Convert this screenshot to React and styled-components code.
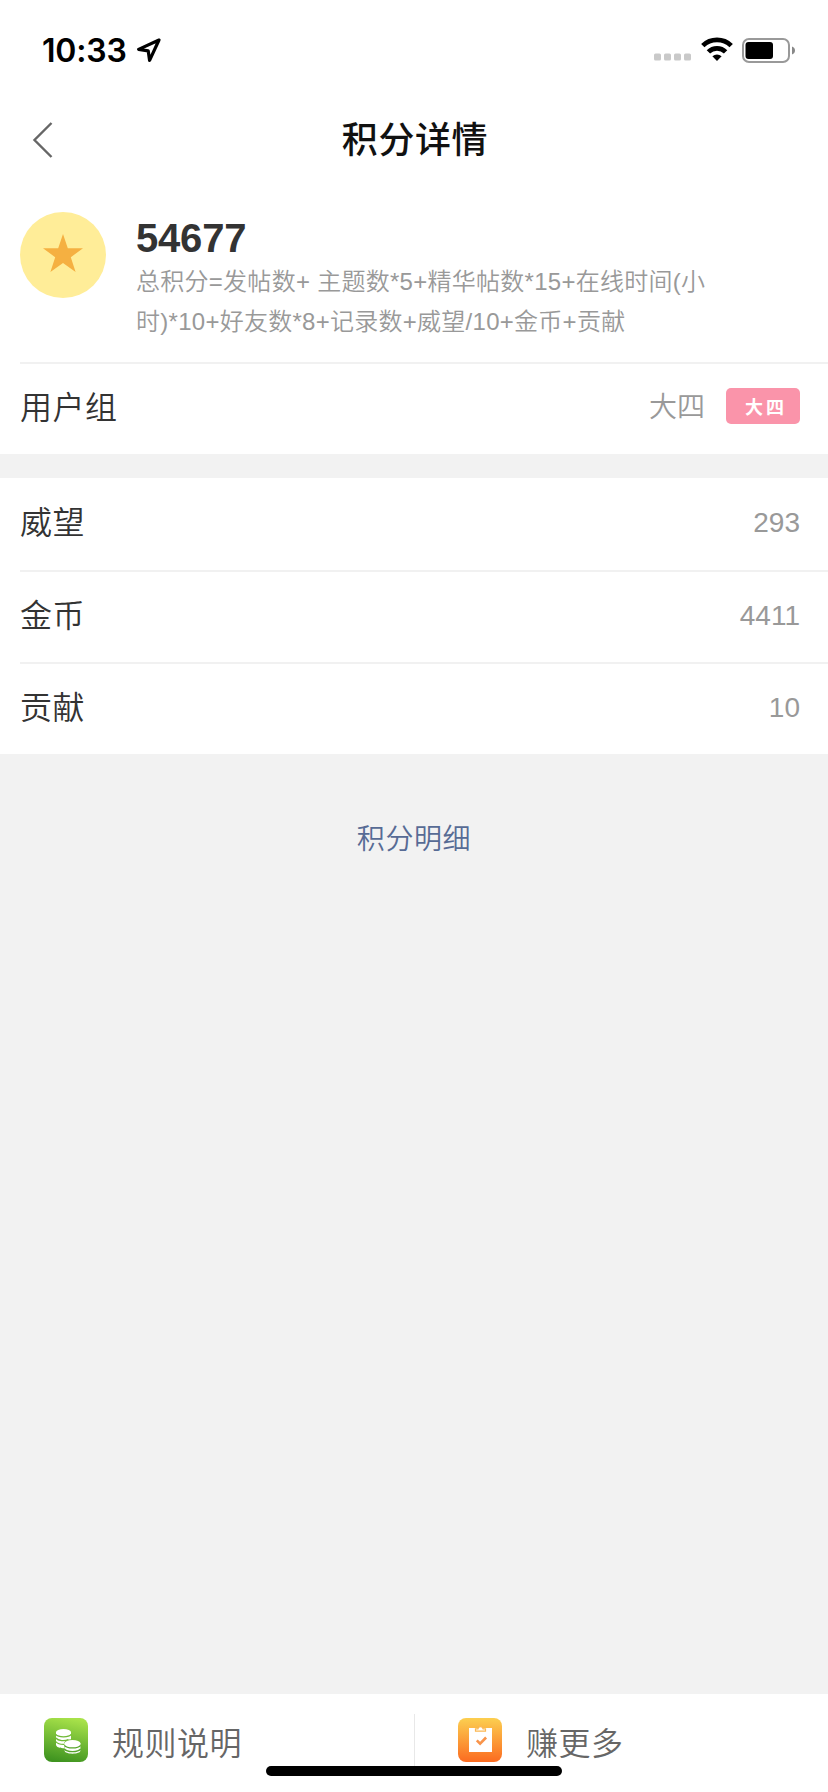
import React from 'react';
import styled, { createGlobalStyle } from 'styled-components';

const GlobalStyle = createGlobalStyle`
  * {
    box-sizing: border-box;
  }
  body {
    margin: 0;
    background: #f2f2f2;
    font-family: 'Liberation Sans', 'Noto Sans CJK SC', sans-serif;
    font-weight: 350;
  }
`;

const Page = styled.div`
  width: 828px;
  height: 1792px;
  display: flex;
  flex-direction: column;
  background: #f2f2f2;
  overflow: hidden;
`;

const StatusBar = styled.div`
  height: 88px;
  padding: 12px 33px 0 42px;
  display: flex;
  align-items: center;
  justify-content: space-between;
  background: #fff;
`;

const StatusGroup = styled.div`
  display: flex;
  align-items: center;
`;

const Time = styled.span`
  font-family: Inter, sans-serif;
  font-size: 32px;
  font-weight: 600;
  line-height: 40px;
  letter-spacing: -0.2px;
  color: #000;
  margin: 1px 9px 0 0;
`;

const NavBar = styled.header`
  height: 104px;
  padding: 2px 32px 0;
  display: grid;
  grid-template-columns: 40px 1fr 40px;
  align-items: center;
  background: #fff;
`;

const Title = styled.h1`
  margin: 0 -2px 0 0;
  font-size: 36px;
  font-weight: 500;
  line-height: 48px;
  letter-spacing: 0.6px;
  text-align: center;
  color: #111;
`;

const Score = styled.section`
  height: 170px;
  padding: 20px 0 0 20px;
  display: flex;
  align-items: flex-start;
  background: #fff;
`;

const Medal = styled.div`
  flex: none;
  width: 86px;
  height: 86px;
  border-radius: 50%;
  display: flex;
  align-items: center;
  justify-content: center;
  background: #ffed98;
`;

const ScoreText = styled.div`
  width: 590px;
  margin-left: 30px;
  padding-top: 3px;
`;

const Total = styled.div`
  font-size: 40px;
  font-weight: 700;
  line-height: 46px;
  letter-spacing: -0.2px;
  color: #333;
`;

const Formula = styled.p`
  margin: 1px 0 0;
  font-size: 24px;
  line-height: 40px;
  letter-spacing: 0.27px;
  white-space: nowrap;
  color: #999;
`;

const List = styled.section`
  background: #fff;
  margin-bottom: ${({ $gap }) => $gap || 0}px;
`;

const Row = styled.div`
  height: 92px;
  margin-left: 20px;
  padding: 0 28px 3px 0;
  display: flex;
  align-items: center;
  border-top: ${({ $line }) => $line || 0}px solid #f1f1f1;
`;

const Label = styled.span`
  flex: 1;
  font-size: 32px;
  line-height: 44px;
  letter-spacing: 0.5px;
  color: #333;
`;

const Value = styled.span`
  font-size: 28px;
  line-height: 40px;
  color: #999;
`;

const GroupTag = styled.span`
  width: 74px;
  height: 36px;
  margin: 0 0 3px 21px;
  padding-left: 6px;
  border-radius: 5px;
  display: flex;
  align-items: center;
  justify-content: center;
  background: #fa94aa;
  color: #fff;
  font-size: 18px;
  font-weight: 700;
  letter-spacing: 3px;
`;

const DetailLink = styled.a`
  margin: 64px auto 0;
  font-size: 28px;
  line-height: 44px;
  letter-spacing: 0.6px;
  color: #576b95;
`;

const TabBar = styled.footer`
  position: relative;
  height: 98px;
  margin-top: auto;
  display: flex;
  background: #fff;
`;

const Tab = styled.div`
  flex: 1;
  padding: 24px 0 0 44px;
  display: flex;
  align-items: flex-start;
`;

const TabDivider = styled.div`
  width: 1px;
  height: 56px;
  margin: 20px -1px 0 0;
  background: #e8e8e8;
`;

const TabLabel = styled.span`
  margin: 2px 0 0 24px;
  font-size: 32px;
  line-height: 48px;
  letter-spacing: 0.5px;
  color: #666;
`;

const HomeIndicator = styled.div`
  position: absolute;
  left: 266px;
  bottom: 16px;
  width: 296px;
  height: 10px;
  border-radius: 5px;
  background: #000;
`;

const LocationIcon = () => (
  <svg width="26" height="26" viewBox="0 0 26 26" fill="none" stroke="#000" strokeWidth="3.2" strokeLinejoin="round">
    <path d="M23 3 2.6 12.4 12.2 13.8 13.6 23.4Z" />
  </svg>
);

const SignalIcon = () => (
  <svg width="38" height="24" viewBox="0 0 38 24" fill="#c9c9c9">
    {[0, 10, 20, 30].map((x) => (
      <rect key={x} x={x} y="15.5" width="7" height="7" rx="1.6" />
    ))}
  </svg>
);

const WifiSvg = styled.svg`
  margin: 0 9px 2px;
`;

const WifiIcon = () => (
  <WifiSvg width="32" height="24" viewBox="0 0 32 24">
    <g fill="none" stroke="#000" strokeWidth="4.8">
      <path d="M1.8 8.6a20.4 20.4 0 0 1 28.4 0" />
      <path d="M7.4 14.9a12.2 12.2 0 0 1 17.2 0" />
    </g>
    <path d="M11.4 19.2a7 7 0 0 1 9.2 0L16 24Z" fill="#000" />
  </WifiSvg>
);

const BatteryIcon = () => (
  <svg width="53" height="25" viewBox="0 0 53 25">
    <rect x="1" y="1" width="46" height="23" rx="6" fill="none" stroke="#999" strokeWidth="2" />
    <rect x="3.5" y="4" width="27.5" height="17" rx="3" fill="#000" />
    <path d="M50 8.5c4 1.2 4 6.8 0 8Z" fill="#888" />
  </svg>
);

const BackIcon = () => (
  <svg width="22" height="38" viewBox="0 0 22 38" fill="none" stroke="#666" strokeWidth="2.4">
    <path d="M19.5 1 2.5 18l17 17" />
  </svg>
);

const StarSvg = styled.svg`
  margin-top: -5px;
`;

const StarIcon = () => (
  <StarSvg width="42" height="40" viewBox="0 0 42 40" fill="#f5b041">
    <path d="M21 1 25.8 15.3H41L28.8 24.2 33.6 39 21 30 8.4 39 13.2 24.2 1 15.3H16.2Z" />
  </StarSvg>
);

const CoinsIcon = () => (
  <svg width="44" height="44" viewBox="0 0 44 44">
    <defs>
      <linearGradient id="green" x1="0.6" y1="0" x2="0.4" y2="1">
        <stop offset="0" stopColor="#a8e24a" />
        <stop offset="1" stopColor="#3f9420" />
      </linearGradient>
    </defs>
    <rect width="44" height="44" rx="8" fill="url(#green)" />
    <path d="M12 14v12.6c0 2.6 4 4 8.4 3.6V24c1.2-1.8 3.6-2.6 6.6-2.8V14Z" fill="#fff" />
    <ellipse cx="19.5" cy="14" rx="7.5" ry="3" fill="#fff" />
    <g fill="none" stroke="#6fb935" strokeWidth="1.3">
      <path d="M11.8 16.4c2.5 3.2 13 3.2 15.4 0" />
      <path d="M11.8 20c2.5 3.2 9 3.2 12.6 1.6" />
      <path d="M11.8 23.6c2 2.3 5 3 8.6 2.8" />
    </g>
    <path d="M20.6 25.4v7.2c0 4.2 15.8 4.2 15.8 0v-7.2Z" fill="#fff" />
    <ellipse cx="28.5" cy="25.2" rx="7.9" ry="3.2" fill="#fff" />
    <g fill="none" stroke="#55a52a" strokeWidth="1.3">
      <path d="M20.4 27.4c2.5 3.4 13.7 3.4 16.2 0" />
      <path d="M20.4 31c2.5 3.4 13.7 3.4 16.2 0" />
    </g>
  </svg>
);

const TaskIcon = () => (
  <svg width="44" height="44" viewBox="0 0 44 44">
    <defs>
      <linearGradient id="orange" x1="0" y1="0" x2="0" y2="1">
        <stop offset="0" stopColor="#fccf50" />
        <stop offset="1" stopColor="#fb6b20" />
      </linearGradient>
    </defs>
    <rect width="44" height="44" rx="8" fill="url(#orange)" />
    <path d="M11 10h23v24H11Z" fill="#fff" />
    <path d="M17.5 13.2v-2.4h2.4c.4-3 4.8-3 5.2 0h2.4v2.4Z" fill="#fff" stroke="#fcb750" strokeWidth="1.2" />
    <path d="m18.8 22.3 3.3 3.4 6-6.2" fill="none" stroke="#f9944a" strokeWidth="2.6" />
  </svg>
);

const stats = [
  { name: '威望', value: 293, line: 0 },
  { name: '金币', value: 4411, line: 2 },
  { name: '贡献', value: 10, line: 2 },
];

export default function App() {
  return (
    <>
      <GlobalStyle />
      <Page>
        <StatusBar>
          <StatusGroup>
            <Time>10:33</Time>
            <LocationIcon />
          </StatusGroup>
          <StatusGroup>
            <SignalIcon />
            <WifiIcon />
            <BatteryIcon />
          </StatusGroup>
        </StatusBar>
        <NavBar>
          <BackIcon />
          <Title>积分详情</Title>
        </NavBar>
        <Score>
          <Medal>
            <StarIcon />
          </Medal>
          <ScoreText>
            <Total>54677</Total>
            <Formula>
              总积分=发帖数+ 主题数*5+精华帖数*15+在线时间(小
              <br />
              时)*10+好友数*8+记录数+威望/10+金币+贡献
            </Formula>
          </ScoreText>
        </Score>
        <List $gap={24}>
          <Row $line={2}>
            <Label>用户组</Label>
            <Value>大四</Value>
            <GroupTag>大四</GroupTag>
          </Row>
        </List>
        <List>
          {stats.map((item) => (
            <Row key={item.name} $line={item.line}>
              <Label>{item.name}</Label>
              <Value>{item.value}</Value>
            </Row>
          ))}
        </List>
        <DetailLink>积分明细</DetailLink>
        <TabBar>
          <Tab>
            <CoinsIcon />
            <TabLabel>规则说明</TabLabel>
          </Tab>
          <TabDivider />
          <Tab>
            <TaskIcon />
            <TabLabel>赚更多</TabLabel>
          </Tab>
          <HomeIndicator />
        </TabBar>
      </Page>
    </>
  );
}
